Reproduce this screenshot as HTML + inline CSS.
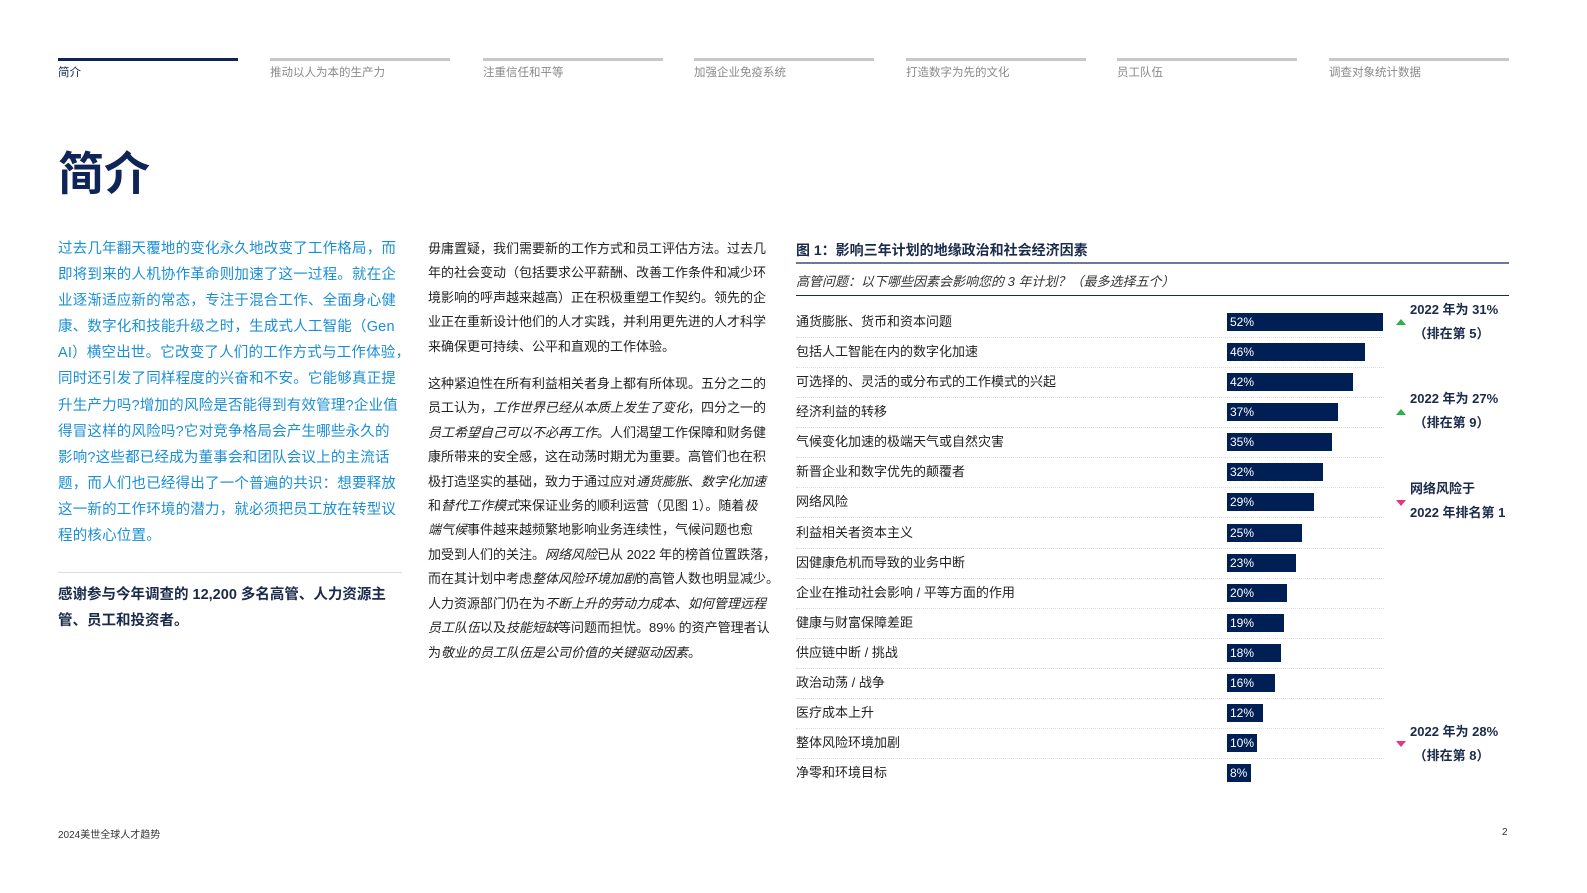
<!DOCTYPE html><html><head><meta charset="utf-8"><style>
body{margin:0;width:1587px;height:893px;background:#fff;position:relative;font-family:"Liberation Sans","Noto Sans CJK SC",sans-serif;overflow:hidden}
.a{position:absolute}
.nav{top:58px;height:3px;background:#c8c8c8;width:180px}
.nt{top:64px;font-size:11.5px;color:#8a8a8a}
.l{left:58px;top:236px;font-size:14.5px;line-height:26.1px;color:#1a8fd6;white-space:nowrap;letter-spacing:0.2px}
.m{left:428px;top:237px;font-size:13px;line-height:24.4px;color:#222;white-space:nowrap}
i{font-style:italic}
.row{position:absolute;left:796px;width:588px;height:30px;border-bottom:1px dotted #ddd}
.row span{position:absolute;left:0;top:4px;font-size:13px;color:#222}
.row b{position:absolute;left:431px;top:6px;height:18px;background:#001f54;color:#fff;font-weight:normal;font-size:12px;line-height:18px;padding-left:3px;box-sizing:border-box}
.note{left:1410px;font-size:13px;font-weight:bold;color:#1a2a4a;line-height:24px}
.up{width:0;height:0;border-left:5px solid transparent;border-right:5px solid transparent;border-bottom:6px solid #2bb04a}
.dn{width:0;height:0;border-left:5px solid transparent;border-right:5px solid transparent;border-top:6px solid #e8367e}
</style></head><body>
<div class="a nav" style="left:58px;background:#0f2557"></div><div class="a nt" style="left:58px;color:#0f2557">简介</div>
<div class="a nav" style="left:270px"></div><div class="a nt" style="left:270px">推动以人为本的生产力</div>
<div class="a nav" style="left:483px"></div><div class="a nt" style="left:483px">注重信任和平等</div>
<div class="a nav" style="left:694px"></div><div class="a nt" style="left:694px">加强企业免疫系统</div>
<div class="a nav" style="left:906px"></div><div class="a nt" style="left:906px">打造数字为先的文化</div>
<div class="a nav" style="left:1117px"></div><div class="a nt" style="left:1117px">员工队伍</div>
<div class="a nav" style="left:1329px"></div><div class="a nt" style="left:1329px">调查对象统计数据</div>
<div class="a" style="left:58px;top:138px;font-size:46px;font-weight:bold;color:#0f2557">简介</div>
<div class="a l">过去几年翻天覆地的变化永久地改变了工作格局，而<br>即将到来的人机协作革命则加速了这一过程。就在企<br>业逐渐适应新的常态，专注于混合工作、全面身心健<br>康、数字化和技能升级之时，生成式人工智能（Gen<br>AI）横空出世。它改变了人们的工作方式与工作体验，<br>同时还引发了同样程度的兴奋和不安。它能够真正提<br>升生产力吗?增加的风险是否能得到有效管理?企业值<br>得冒这样的风险吗?它对竞争格局会产生哪些永久的<br>影响?这些都已经成为董事会和团队会议上的主流话<br>题，而人们也已经得出了一个普遍的共识：想要释放<br>这一新的工作环境的潜力，就必须把员工放在转型议<br>程的核心位置。</div>
<div class="a" style="left:58px;top:572px;width:344px;height:1px;background:#ddd"></div>
<div class="a" style="left:58px;top:582px;font-size:14.5px;line-height:26px;font-weight:bold;color:#1a2a4a;white-space:nowrap">感谢参与今年调查的 12,200 多名高管、人力资源主<br>管、员工和投资者。</div>
<div class="a m">毋庸置疑，我们需要新的工作方式和员工评估方法。过去几<br>年的社会变动（包括要求公平薪酬、改善工作条件和减少环<br>境影响的呼声越来越高）正在积极重塑工作契约。领先的企<br>业正在重新设计他们的人才实践，并利用更先进的人才科学<br>来确保更可持续、公平和直观的工作体验。<div style="height:13px"></div>这种紧迫性在所有利益相关者身上都有所体现。五分之二的<br>员工认为，<i>工作世界已经从本质上发生了变化</i>，四分之一的<br><i>员工希望自己可以不必再工作</i>。人们渴望工作保障和财务健<br>康所带来的安全感，这在动荡时期尤为重要。高管们也在积<br>极打造坚实的基础，致力于通过应对<i>通货膨胀</i>、<i>数字化加速</i><br>和<i>替代工作模式</i>来保证业务的顺利运营（见图 1）。随着<i>极</i><br><i>端气候</i>事件越来越频繁地影响业务连续性，气候问题也愈<br>加受到人们的关注。<i>网络风险</i>已从 2022 年的榜首位置跌落，<br>而在其计划中考虑<i>整体风险环境加剧</i>的高管人数也明显减少。<br>人力资源部门仍在为<i>不断上升的劳动力成本</i>、<i>如何管理远程</i><br><i>员工队伍</i>以及<i>技能短缺</i>等问题而担忧。89% 的资产管理者认<br>为<i>敬业的员工队伍是公司价值的关键驱动因素</i>。</div>
<div class="a" style="left:796px;top:240px;font-size:14px;font-weight:bold;color:#1a2a4a">图 1：影响三年计划的地缘政治和社会经济因素</div>
<div class="a" style="left:796px;top:262px;width:713px;height:2px;background:#6b7a99"></div>
<div class="a" style="left:796px;top:271px;font-size:13px;font-style:italic;color:#333">高管问题：以下哪些因素会影响您的 3 年计划？（最多选择五个）</div>
<div class="a" style="left:796px;top:295px;width:713px;height:1px;background:#1a2a4a"></div>
<div class="row" style="top:307px"><span>通货膨胀、货币和资本问题</span><b style="width:156px">52%</b></div>
<div class="row" style="top:337px"><span>包括人工智能在内的数字化加速</span><b style="width:138px">46%</b></div>
<div class="row" style="top:367px"><span>可选择的、灵活的或分布式的工作模式的兴起</span><b style="width:126px">42%</b></div>
<div class="row" style="top:397px"><span>经济利益的转移</span><b style="width:111px">37%</b></div>
<div class="row" style="top:427px"><span>气候变化加速的极端天气或自然灾害</span><b style="width:105px">35%</b></div>
<div class="row" style="top:457px"><span>新晋企业和数字优先的颠覆者</span><b style="width:96px">32%</b></div>
<div class="row" style="top:487px"><span>网络风险</span><b style="width:87px">29%</b></div>
<div class="row" style="top:518px"><span>利益相关者资本主义</span><b style="width:75px">25%</b></div>
<div class="row" style="top:548px"><span>因健康危机而导致的业务中断</span><b style="width:69px">23%</b></div>
<div class="row" style="top:578px"><span>企业在推动社会影响 / 平等方面的作用</span><b style="width:60px">20%</b></div>
<div class="row" style="top:608px"><span>健康与财富保障差距</span><b style="width:57px">19%</b></div>
<div class="row" style="top:638px"><span>供应链中断 / 挑战</span><b style="width:54px">18%</b></div>
<div class="row" style="top:668px"><span>政治动荡 / 战争</span><b style="width:48px">16%</b></div>
<div class="row" style="top:698px"><span>医疗成本上升</span><b style="width:36px">12%</b></div>
<div class="row" style="top:728px"><span>整体风险环境加剧</span><b style="width:30px">10%</b></div>
<div class="row" style="top:758px;border:none"><span>净零和环境目标</span><b style="width:24px">8%</b></div>
<div class="a up" style="left:1396px;top:319px"></div><div class="a note" style="top:298px">2022 年为 31%<br>&nbsp;（排在第 5）</div>
<div class="a up" style="left:1396px;top:409px"></div><div class="a note" style="top:387px">2022 年为 27%<br>&nbsp;（排在第 9）</div>
<div class="a dn" style="left:1396px;top:500px"></div><div class="a note" style="top:477px">网络风险于<br>2022 年排名第 1</div>
<div class="a dn" style="left:1396px;top:741px"></div><div class="a note" style="top:720px">2022 年为 28%<br>&nbsp;（排在第 8）</div>
<div class="a" style="left:58px;top:826px;font-size:10px;color:#333">2024美世全球人才趋势</div>
<div class="a" style="left:1502px;top:827px;font-size:10px;color:#333">2</div>
</body></html>
